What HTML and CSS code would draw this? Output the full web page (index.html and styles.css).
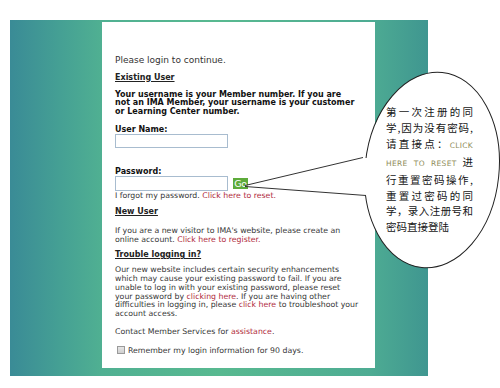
FILE: index.html
```html
<!DOCTYPE html>
<html>
<head>
<meta charset="utf-8">
<link rel="stylesheet" href="styles.css">
</head>
<body>
<div class="panel">
  <div class="card">
    <p class="intro">Please login to continue.</p>
    <h3 class="head">Existing User</h3>
    <p class="bold">Your username is your Member number. If you are<br>not an IMA Member, your username is your customer<br>or Learning Center number.</p>
    <label class="lbl lbl-user">User Name:</label>
    <div class="field-row"><span class="field"></span></div>
    <label class="lbl lbl-pass">Password:</label>
    <div class="field-row"><span class="field field-pass"></span><span class="go">Go</span></div>
    <p class="forgot">I forgot my password. <a class="lnk">Click here to reset.</a></p>
    <h3 class="head head-new">New User</h3>
    <p class="txt txt-new">If you are a new visitor to IMA's website, please create an<br>online account. <a class="lnk">Click here to register.</a></p>
    <h3 class="head head-trouble">Trouble logging in?</h3>
    <p class="txt txt-trouble">Our new website includes certain security enhancements<br>which may cause your existing password to fail. If you are<br>unable to log in with your existing password, please reset<br>your password by <a class="lnk">clicking here</a>. If you are having other<br>difficulties in logging in, please <a class="lnk">click here</a> to troubleshoot your<br>account access.</p>
    <p class="txt txt-contact">Contact Member Services for <a class="lnk">assistance</a>.</p>
    <div class="remember"><span class="check"></span><span>Remember my login information for 90 days.</span></div>
  </div>
</div>
<svg class="callout" width="500" height="388" viewBox="0 0 500 388">
  <ellipse cx="432" cy="170" rx="67" ry="98" transform="rotate(6 432 170)" fill="#fff" stroke="#222" stroke-width="1"/>
  <polygon points="363,158 245,186 366,195 384,195 384,158" fill="#fff"/>
  <polyline points="363,157.5 245,185.5" fill="none" stroke="#333" stroke-width="1"/>
  <polyline points="245,186.5 366,195.5" fill="none" stroke="#333" stroke-width="1"/>
</svg>
<div class="note">
  <div class="nl j">第一次注册的同</div>
  <div class="nl j">学,因为没有密码,</div>
  <div class="nl j">请直接点：<span class="en">CLICK</span></div>
  <div class="nl j"><span class="en">HERE TO RESET</span> 进</div>
  <div class="nl j">行重置密码操作,</div>
  <div class="nl j">重置过密码的同</div>
  <div class="nl j">学，录入注册号和</div>
  <div class="nl">密码直接登陆</div>
</div>
</body>
</html>
```
FILE: styles.css
```css
html, body {
  margin: 0;
  padding: 0;
  background: #fff;
}
body {
  width: 500px;
  height: 388px;
  overflow: hidden;
  position: relative;
  font-family: "DejaVu Sans", Verdana, sans-serif;
}
.panel {
  margin: 20px 0 0 10px;
  width: 418px;
  height: 356px;
  box-sizing: border-box;
  padding: 2px 53px 8px 92px;
  background: linear-gradient(to right, #3a8b96 0%, #45a094 12%, #50b092 22%, #58b990 50%, #4eac93 86%, #3f9690 100%);
}
.card {
  background: #fff;
  width: 273px;
  height: 346px;
  box-sizing: border-box;
  padding: 33px 0 0 13px;
  color: #363636;
  font-size: 7.8px;
  line-height: 8.8px;
  white-space: nowrap;
}
p, h3 { margin: 0; }
.intro {
  font-size: 9px;
  line-height: 10px;
  color: #333;
}
.head {
  font-size: 8px;
  line-height: 9px;
  font-weight: bold;
  text-decoration: underline;
  color: #222;
  margin-top: 7.5px;
}
.bold {
  font-weight: bold;
  font-size: 8px;
  color: #111;
  margin-top: 9px;
  line-height: 8.7px;
}
.lbl {
  display: block;
  font-weight: bold;
  font-size: 8px;
  color: #111;
  line-height: 8px;
}
.lbl-user { margin-top: 9px; }
.lbl-pass { margin-top: 20px; }
.field-row {
  display: flex;
  align-items: center;
  gap: 5px;
}
.field {
  display: block;
  width: 113px;
  height: 14px;
  box-sizing: border-box;
  border: 1px solid #a8bccf;
  background: #fff;
}
.field-pass { height: 15px; }
.go {
  display: block;
  width: 15px;
  height: 11px;
  background: #5dab3a;
  color: #fff;
  font-size: 9.5px;
  line-height: 11px;
  text-align: center;
  letter-spacing: -0.3px;
}
.forgot { line-height: 9px; margin-top: 0.5px; }
.lnk { color: #b02a3c; }
.head-new { margin-top: 7px; }
.txt-new { margin-top: 10px; line-height: 9px; }
.head-trouble { margin-top: 6px; }
.txt-trouble { margin-top: 7px; }
.txt-contact { margin-top: 8px; line-height: 9px; }
.remember {
  margin-top: 10px;
  display: flex;
  align-items: center;
  gap: 3px;
  line-height: 9px;
  padding-left: 2px;
}
.check {
  display: block;
  width: 8px;
  height: 8px;
  box-sizing: border-box;
  border: 1px solid #9a9a9a;
  background: linear-gradient(#e6e6e6, #cfcfcf);
}
.callout {
  position: absolute;
  left: 0;
  top: 0;
  pointer-events: none;
}
.note {
  position: absolute;
  left: 386px;
  top: 104px;
  width: 87px;
  font-family: "Noto Sans CJK SC", sans-serif;
  font-size: 10.5px;
  line-height: 15.9px;
  color: #151515;
}
.nl { white-space: nowrap; }
.j {
  text-align: justify;
  text-align-last: justify;
}
.en {
  font-family: "DejaVu Sans", sans-serif;
  font-size: 7.5px;
  color: #8f8d5a;
  letter-spacing: 0.3px;
}
```
